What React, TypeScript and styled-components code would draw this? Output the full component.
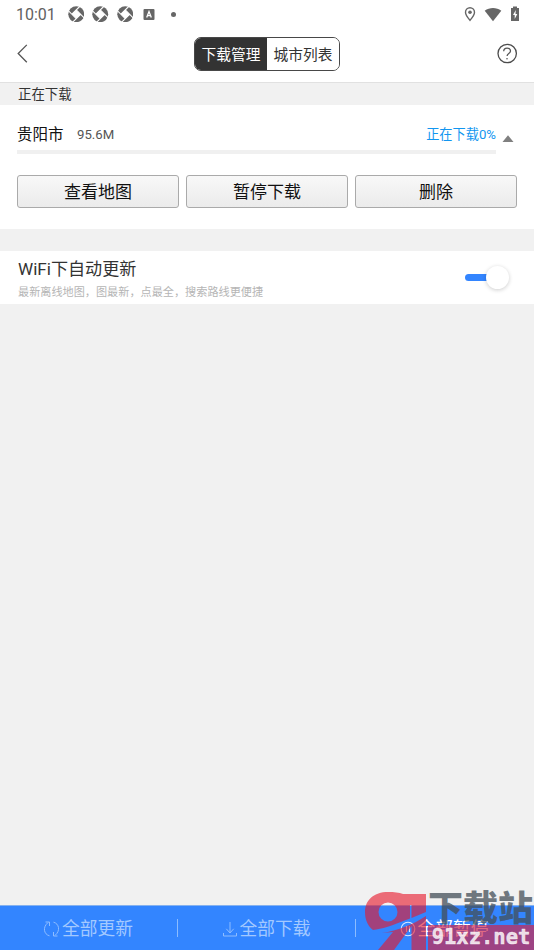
import React from "react";
import styled, { createGlobalStyle } from "styled-components";

const Global = createGlobalStyle`
  * { box-sizing: border-box; }
  body { margin: 0; background: #f1f1f1; font-family: Roboto, "Noto Sans CJK SC", sans-serif; }
  button { font-family: inherit; font-weight: inherit; padding: 0; border: 0; background: none; }
`;

const Screen = styled.div`
  position: relative;
  width: 534px;
  height: 950px;
  overflow: hidden;
  display: flex;
  flex-direction: column;
  background: #f1f1f1;
  font-weight: 400;
`;
const StatusBar = styled.div`
  height: 28px;
  background: #fff;
  display: flex;
  align-items: center;
  justify-content: space-between;
  padding: 0 14px 0 16px;
  color: #616161;
`;
const StatusGroup = styled.div<{ $gap: number }>`
  display: flex;
  align-items: center;
  gap: ${(p) => p.$gap}px;
  height: 26px;
`;
const Clock = styled.span`
  font-size: 16px;
  line-height: 26px;
  padding-top: 2px;
  width: 43.5px;
`;
const Dot = styled.i`
  width: 5px;
  height: 5px;
  border-radius: 50%;
  background: #666;
  margin-left: 6px;
`;
const Header = styled.header`
  height: 55px;
  background: #fff;
  border-bottom: 1px solid #e1e1e1;
  display: flex;
  align-items: center;
  justify-content: space-between;
  padding: 0 16px 3px 16px;
`;
const IconButton = styled.button`
  width: 22px;
  height: 22px;
  display: flex;
`;
const Tabs = styled.div`
  width: 146px;
  height: 34px;
  display: flex;
  border: 1px solid #484848;
  border-radius: 7px;
  overflow: hidden;
`;
const Tab = styled.button<{ $active?: boolean }>`
  flex: 1;
  font-size: 14.7px;
  line-height: 30px;
  padding-top: 2px;
  white-space: nowrap;
  color: ${(p) => (p.$active ? "#fff" : "#333")};
  background: ${(p) => (p.$active ? "#333" : "#fff")};
`;
const SectionTitle = styled.div`
  height: 22px;
  padding-left: 18px;
  font-size: 13.4px;
  line-height: 23px;
  color: #333;
`;
const Card = styled.section`
  height: 124px;
  background: #fff;
  padding: 18px 17px 0;
`;
const CityRow = styled.div`
  display: flex;
  align-items: center;
  height: 24px;
  line-height: 24px;
`;
const City = styled.span`
  font-size: 15.5px;
  color: #111;
  width: 60px;
`;
const Size = styled.span`
  font-size: 13.2px;
  color: #555;
  flex: 1;
`;
const Progress = styled.span`
  font-size: 13.2px;
  color: #1296f0;
  margin-right: 6px;
`;
const Caret = styled.svg`
  width: 12px;
  height: 8px;
  margin: 7px 3px 0 0;
`;
const Track = styled.div`
  height: 4px;
  margin: 3px 21px 0 0;
  background: #f0f0f0;
`;
const Actions = styled.div`
  display: grid;
  grid-template-columns: repeat(3, 1fr);
  gap: 7px;
  margin-top: 21px;
`;
const Action = styled.button`
  height: 33px;
  border: 1px solid #aaa;
  border-radius: 3px;
  background: linear-gradient(#f8f8f8, #ebebeb);
  font-size: 17px;
  line-height: 29px;
  padding-top: 2px;
  color: #111;
`;
const Setting = styled.section`
  margin-top: 22px;
  height: 53px;
  background: #fff;
  display: flex;
  justify-content: space-between;
  align-items: center;
  padding: 0 24px 0 18px;
`;
const SettingText = styled.div`
  height: 53px;
  padding-top: 5px;
`;
const SettingName = styled.div`
  font-size: 17.1px;
  line-height: 26px;
  color: #333;
`;
const SettingHint = styled.div`
  font-size: 11.15px;
  line-height: 18px;
  padding-top: 2px;
  color: #b5b5b5;
`;
const Switch = styled.div`
  display: flex;
  align-items: center;
  width: 45px;
`;
const SwitchTrack = styled.i`
  width: 26px;
  height: 7px;
  border-radius: 4px 0 0 4px;
  background: #3385ff;
`;
const Knob = styled.i`
  flex: none;
  width: 23px;
  height: 23px;
  margin-left: -5px;
  border-radius: 50%;
  background: #fff;
  box-shadow: 0 1px 4px rgba(0, 0, 0, 0.2);
`;
const Footer = styled.footer`
  height: 45px;
  margin-top: auto;
  border-top: 1px solid #84b1ef;
  background: #3385ff;
  display: grid;
  grid-template-columns: 178px 178px 178px;

  > button + button::before {
    content: "";
    position: absolute;
    left: -1px;
    top: 13px;
    height: 18px;
    width: 1px;
    background: #8cbcff;
  }
`;
const FootItem = styled.button<{ $active?: boolean }>`
  position: relative;
  display: flex;
  align-items: center;
  justify-content: center;
  gap: 2px;
  font-size: 17.7px;
  line-height: 42px;
  padding: 1px 2px 0 0;
  color: ${(p) => (p.$active ? "#fff" : "#a3c9ff")};
`;
const Watermark = styled.div`
  position: absolute;
  left: 364px;
  top: 888px;
  width: 170px;
  height: 62px;
  pointer-events: none;
`;
const Emblem = styled.svg`
  position: absolute;
  left: 0;
  top: 2px;
`;
const MarkTitle = styled.div`
  position: absolute;
  left: 64px;
  top: -2px;
  font: 900 35px/40px "Noto Sans CJK SC", sans-serif;
  color: rgba(68, 79, 88, 0.75);
  white-space: nowrap;
`;
const MarkSite = styled.div`
  position: absolute;
  left: 64px;
  top: 37px;
  width: 106px;
  height: 25px;
  background: rgba(208, 35, 72, 0.68);
  color: rgba(255, 255, 255, 0.82);
  font: bold 20.5px/24px "DejaVu Sans Mono", monospace;
  text-align: center;
  -webkit-text-stroke: 0.5px rgba(255, 255, 255, 0.7);
`;

const Shutter = () => (
  <svg width="16.5" height="16.5" viewBox="0 0 17 17">
    <circle cx="8.5" cy="8.5" r="8.2" fill="#666" />
    <path d="M4 8.5 12.5 0M8.5 4 17 12.5M13 8.5 4.5 17M8.5 13 0 4.5" stroke="#fff" strokeWidth="1.1" />
    <path d="m8.5 4 4.5 4.5-4.5 4.500L4 8.500Z" fill="#fff" />
  </svg>
);

export default function App() {
  return (
    <>
      <Global />
      <Screen>
        <StatusBar>
          <StatusGroup $gap={8}>
            <Clock>10:01</Clock>
            <Shutter />
            <Shutter />
            <Shutter />
            <svg width="16" height="13" viewBox="0 0 15 13">
              <rect x="2" y="1" width="11" height="11" rx="1" fill="#666" />
              <path d="m5.2 9.5 2.3-6 2.3 6M6 7.7h3" fill="none" stroke="#fff" strokeWidth="1.3" />
            </svg>
            <Dot />
          </StatusGroup>
          <StatusGroup $gap={8}>
            <svg width="12" height="16" viewBox="0 0 12 16">
              <path d="M6 1.7a4.5 4.5 0 0 0-4.5 4.5C1.5 9 6 14.3 6 14.3s4.5-5.3 4.5-8.1A4.5 4.5 0 0 0 6 1.7Z" fill="none" stroke="#666" strokeWidth="1.4" />
              <circle cx="6" cy="6.2" r="1.8" fill="#666" />
            </svg>
            <svg width="18" height="15" viewBox="0 0 18 15">
              <path d="M.7 3.7C5.5.1 12.5.1 17.3 3.7L9 14.2Z" fill="#666" />
            </svg>
            <svg width="10" height="16" viewBox="0 0 10 16">
              <path d="M1 2h2V.5h4V2h2v13H1Z" fill="#666" />
              <path d="M5.8 4 3 9h1.700v4L7.300 7.900H5.500Z" fill="#fff" />
            </svg>
          </StatusGroup>
        </StatusBar>

        <Header>
          <IconButton aria-label="返回">
            <svg width="22" height="22" viewBox="0 0 22 22">
              <path d="M10.8 1.9 2.2 10.5l8.6 8.8" fill="none" stroke="#555" strokeWidth="1.3" />
            </svg>
          </IconButton>
          <Tabs>
            <Tab $active>下载管理</Tab>
            <Tab>城市列表</Tab>
          </Tabs>
          <IconButton aria-label="帮助">
            <svg width="22" height="22" viewBox="0 0 22 22">
              <circle cx="11.2" cy="10.5" r="9.2" fill="none" stroke="#4c4c4c" strokeWidth="1.3" />
              <path d="M7.7 8.3c0-4.3 6.8-4.1 6.8-.3 0 2.6-3.4 2.5-3.4 5" fill="none" stroke="#555" strokeWidth="1.3" />
              <circle cx="11" cy="15.7" r=".8" fill="#555" />
            </svg>
          </IconButton>
        </Header>

        <SectionTitle>正在下载</SectionTitle>
        <Card>
          <CityRow>
            <City>贵阳市</City>
            <Size>95.6M</Size>
            <Progress>正在下载0%</Progress>
            <Caret viewBox="0 0 12 8">
              <path d="M.5 7 6 .3 11.500 7Z" fill="#808080" />
            </Caret>
          </CityRow>
          <Track />
          <Actions>
            <Action>查看地图</Action>
            <Action>暂停下载</Action>
            <Action>删除</Action>
          </Actions>
        </Card>

        <Setting>
          <SettingText>
            <SettingName>WiFi下自动更新</SettingName>
            <SettingHint>最新离线地图，图最新，点最全，搜索路线更便捷</SettingHint>
          </SettingText>
          <Switch role="switch" aria-checked="true">
            <SwitchTrack />
            <Knob />
          </Switch>
        </Setting>

        <Footer>
          <FootItem>
            <svg width="17" height="18" viewBox="0 0 17 18" fill="none" stroke="#8fbdff" strokeWidth="1">
              <path d="M6.5 15.8C.8 14.5-.6 7 5 2.600M2.500 2h4v4M10.500 2.200C16.200 3.500 17.600 11 12 15.400M14.500 16h-4v-4" />
            </svg>
            全部更新
          </FootItem>
          <FootItem>
            <svg width="16" height="18" viewBox="0 0 16 18" fill="none" stroke="#8fbdff" strokeWidth="1">
              <path d="M8 2v11M4.3 8.8 8 13l3.7-4.2M1.5 13v3h13v-3" />
            </svg>
            全部下载
          </FootItem>
          <FootItem $active>
            <svg width="16" height="18" viewBox="0 0 16 18" fill="none" stroke="#dce9ff" strokeWidth="1.1">
              <circle cx="8" cy="9" r="6.8" />
              <path d="M6.5 6v6M9.5 6v6" />
            </svg>
            全部暂停
          </FootItem>
        </Footer>

        <Watermark>
          <Emblem width="64" height="60" viewBox="0 0 64 60">
            <g fill="#e6192c" fillOpacity=".62">
              <path
                fillRule="evenodd"
                d="M24 2C10 2 1 10 1 22c0 8 3 14 8 18C18 39 27 36 46 28.500V15h1.500v13L62 22V4H39C35 2.500 30 2 24 2Zm0 10.500a9.500 9.500 0 1 1 0 19 9.500 9.500 0 0 1 0-19Z"
              />
              <path d="M18 43C34 40.500 49 34.500 62 26V60H47.500V36L30 60H14l15-18Z" />
            </g>
          </Emblem>
          <MarkTitle>下载站</MarkTitle>
          <MarkSite>91xz.net</MarkSite>
        </Watermark>
      </Screen>
    </>
  );
}
